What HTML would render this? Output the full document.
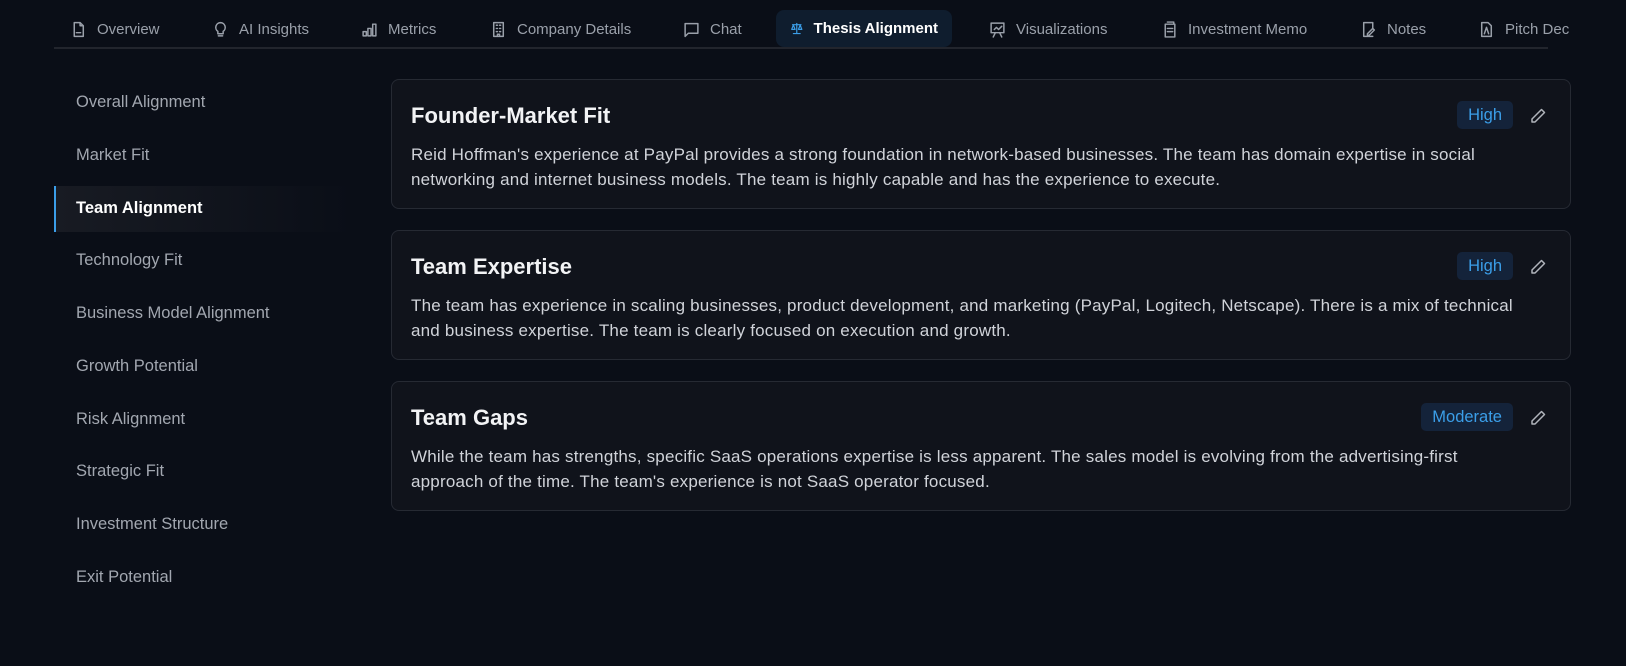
<!DOCTYPE html>
<html><head><style>
*{margin:0;padding:0;box-sizing:border-box}
body{width:1626px;height:666px;background:#0a0e17;font-family:"Liberation Sans",sans-serif;color:#d4d7dd;position:relative;overflow:hidden}
.tabs{position:absolute;left:54px;top:0;width:1494px;height:49px;border-bottom:2px solid #22252d}
.tab{position:absolute;top:11px;height:37px;display:flex;align-items:center;font-size:15px;color:#9aa0aa;white-space:nowrap}
.tab svg{width:17px;height:17px;margin-right:10px;fill:none;stroke:#9aa0aa;stroke-width:1.4;stroke-linecap:round;stroke-linejoin:round}
.tab.act{top:10px;background:#0f1d2e;border-radius:8px;color:#fff;font-weight:bold;padding:0 14px}
.tab.act svg{stroke:#3b9ee8}
.si{position:absolute;left:76px;font-size:16.5px;color:#a2a7b0;line-height:20px}
.act-box{position:absolute;left:54px;top:186px;width:300px;height:46px;background:linear-gradient(90deg,#181b23,#0a0e17);border-left:2px solid #3b9ee8}
.card{position:absolute;left:391px;width:1180px;height:130px;background:#10131b;border:1px solid #262a33;border-radius:8px;padding:0 20px}
.card h2{position:absolute;left:19px;top:23px;font-size:22px;font-weight:bold;color:#f2f3f5}
.card p{position:absolute;left:19px;top:62px;white-space:nowrap;font-size:17px;line-height:25px;color:#d0d3d9;letter-spacing:0.2px}
.badge{position:absolute;top:21px;right:57px;height:28px;padding:0 11px;background:#14233a;border-radius:5px;color:#3b9ee8;font-size:16.5px;line-height:28px}
.pen{position:absolute;top:27px;right:23px;width:18px;height:18px}
</style></head><body>
<div class="tabs">
<div class="tab" style="left:16px"><svg viewBox="0 0 16 16"><path d="M4 1.5h5.5l3 3v10h-8.5z M9.5 1.5v3h3 M6 11h4"/></svg>Overview</div>
<div class="tab" style="left:158px"><svg viewBox="0 0 16 16"><path d="M8 1.5a4.5 4.5 0 0 0-2.5 8.2V12h5V9.7A4.5 4.5 0 0 0 8 1.5z M6 14h4"/></svg>AI Insights</div>
<div class="tab" style="left:307px"><svg viewBox="0 0 16 16"><path d="M2 14V10h3v4z M6.5 14V7h3v7z M11 14V3h3v11z"/></svg>Metrics</div>
<div class="tab" style="left:436px"><svg viewBox="0 0 16 16"><path d="M3.5 14.5V1.5h9v13z M6 4h1M9 4h1M6 7h1M9 7h1M6 10h1M9 10h1M7 14.5v-2h2v2"/></svg>Company Details</div>
<div class="tab" style="left:629px"><svg viewBox="0 0 16 16"><path d="M2 2.5h12v9H5l-3 3z"/></svg>Chat</div>
<div class="tab act" style="left:722px;width:176px"><svg viewBox="0 0 16 16"><path d="M8 2v12M4 14h8M3 3.5h10M4 4l-2 5h4zM12 4l-2 5h4z"/></svg>Thesis Alignment</div>
<div class="tab" style="left:935px"><svg viewBox="0 0 16 16"><path d="M2 2h12v9H2z M5 8l2-2 2 2 3-3 M6 11l-2 4M10 11l2 4"/></svg>Visualizations</div>
<div class="tab" style="left:1107px"><svg viewBox="0 0 16 16"><path d="M4 3h9v12H4z M6 1h6v2 M6 7h5M6 10h5"/></svg>Investment Memo</div>
<div class="tab" style="left:1306px"><svg viewBox="0 0 16 16"><path d="M12 7V1.5H3.5v13H12 M7 12l5-5 1.5 1.5-5 5H7z"/></svg>Notes</div>
<div class="tab" style="left:1424px"><svg viewBox="0 0 16 16"><path d="M3.5 1.5h6l3 3v10h-9z M6 12l2-6 2 6"/></svg>Pitch Dec</div>
</div>
<div class="act-box"></div>
<div class="si" style="top:92px">Overall Alignment</div>
<div class="si" style="top:145px">Market Fit</div>
<div class="si" style="top:198px;color:#fff;font-weight:bold">Team Alignment</div>
<div class="si" style="top:250px">Technology Fit</div>
<div class="si" style="top:303px">Business Model Alignment</div>
<div class="si" style="top:356px">Growth Potential</div>
<div class="si" style="top:409px">Risk Alignment</div>
<div class="si" style="top:461px">Strategic Fit</div>
<div class="si" style="top:514px">Investment Structure</div>
<div class="si" style="top:567px">Exit Potential</div>
<div class="card" style="top:79px"><h2>Founder-Market Fit</h2><span class="badge">High</span><svg class="pen" viewBox="0 0 18 18" fill="none" stroke="#b0b4bb" stroke-width="1.5" stroke-linejoin="round"><path d="M12.5 2.5l3 3L6 15H3v-3z"/></svg><p>Reid Hoffman's experience at PayPal provides a strong foundation in network-based businesses. The team has domain expertise in social<br>networking and internet business models. The team is highly capable and has the experience to execute.</p></div>
<div class="card" style="top:230px"><h2>Team Expertise</h2><span class="badge">High</span><svg class="pen" viewBox="0 0 18 18" fill="none" stroke="#b0b4bb" stroke-width="1.5" stroke-linejoin="round"><path d="M12.5 2.5l3 3L6 15H3v-3z"/></svg><p>The team has experience in scaling businesses, product development, and marketing (PayPal, Logitech, Netscape). There is a mix of technical<br>and business expertise. The team is clearly focused on execution and growth.</p></div>
<div class="card" style="top:381px"><h2>Team Gaps</h2><span class="badge">Moderate</span><svg class="pen" viewBox="0 0 18 18" fill="none" stroke="#b0b4bb" stroke-width="1.5" stroke-linejoin="round"><path d="M12.5 2.5l3 3L6 15H3v-3z"/></svg><p>While the team has strengths, specific SaaS operations expertise is less apparent. The sales model is evolving from the advertising-first<br>approach of the time. The team's experience is not SaaS operator focused.</p></div>
</body></html>
